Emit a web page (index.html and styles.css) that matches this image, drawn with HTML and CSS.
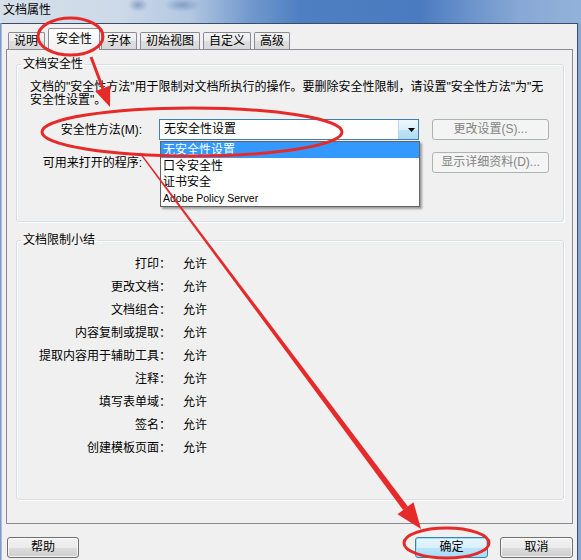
FILE: index.html
```html
<!DOCTYPE html>
<html lang="zh-CN">
<head>
<meta charset="utf-8">
<title>文档属性</title>
<link rel="stylesheet" href="styles.css">
</head>
<body>
<div class="window">
  <div class="titlebar"><span class="title">文档属性</span></div>
  <div class="client">
    <div class="tabs">
      <div class="tab">说明</div>
      <div class="tab active">安全性</div>
      <div class="tab">字体</div>
      <div class="tab">初始视图</div>
      <div class="tab">自定义</div>
      <div class="tab">高级</div>
    </div>
    <div class="panel">
      <fieldset class="group sec">
        <legend>文档安全性</legend>
        <p class="desc">文档的"安全性方法"用于限制对文档所执行的操作。要删除安全性限制，请设置"安全性方法"为"无<br>安全性设置"。</p>
        <div class="form">
          <label class="lbl">安全性方法(M):</label>
          <div class="combo">
            <span class="combo-text">无安全性设置</span>
            <span class="combo-btn"><svg width="7" height="4" viewBox="0 0 7 4"><path d="M0 0H7L3.5 4Z" fill="#000"/></svg></span>
            <ul class="droplist">
              <li class="sel">无安全性设置</li>
              <li>口令安全性</li>
              <li>证书安全</li>
              <li class="en">Adobe Policy Server</li>
            </ul>
          </div>
          <button class="btn disabled" type="button">更改设置(S)...</button>
          <label class="lbl">可用来打开的程序:</label>
          <div></div>
          <button class="btn disabled" type="button">显示详细资料(D)...</button>
        </div>
      </fieldset>
      <fieldset class="group summary">
        <legend>文档限制小结</legend>
        <dl class="rows">
          <dt>打印：</dt><dd>允许</dd>
          <dt>更改文档：</dt><dd>允许</dd>
          <dt>文档组合：</dt><dd>允许</dd>
          <dt>内容复制或提取：</dt><dd>允许</dd>
          <dt>提取内容用于辅助工具：</dt><dd>允许</dd>
          <dt>注释：</dt><dd>允许</dd>
          <dt>填写表单域：</dt><dd>允许</dd>
          <dt>签名：</dt><dd>允许</dd>
          <dt>创建模板页面：</dt><dd>允许</dd>
        </dl>
      </fieldset>
    </div>
    <div class="footer">
      <button class="btn help" type="button">帮助</button>
      <span class="spacer"></span>
      <button class="btn default" type="button">确定</button>
      <button class="btn" type="button">取消</button>
    </div>
  </div>
  <svg class="annot" width="581" height="560" viewBox="0 0 581 560">
    <g fill="none" stroke="#e62a2a" stroke-width="3">
      <ellipse cx="70.5" cy="36.5" rx="32.5" ry="18.5"/>
      <ellipse cx="192" cy="132" rx="150" ry="24"/>
      <ellipse cx="446.5" cy="543" rx="42.5" ry="15"/>
      <line x1="91" y1="57" x2="102.8" y2="88.3"/>
    </g>
    <g fill="#e62a2a">
      <polygon points="110,107 110.3,85.4 95.3,91.2"/>
      <polygon points="140.5,152.6 139.5,153.4 403.1,510 407.9,506.4"/>
      <polygon points="421,529 413.5,502.2 397.5,514.2"/>
    </g>
  </svg>
</div>
</body>
</html>
```

FILE: styles.css
```css
* { box-sizing: border-box; }
html, body { margin: 0; padding: 0; }
body {
  width: 581px;
  height: 560px;
  overflow: hidden;
  font-family: "Liberation Sans", "Noto Sans CJK SC", sans-serif;
  font-size: 12px;
  color: #000;
}
.window {
  position: relative;
  width: 581px;
  height: 560px;
  display: flex;
  flex-direction: column;
  background: linear-gradient(90deg, #7b9bcd 0, #86a6d4 100%);
}
.titlebar {
  flex: none;
  height: 23px;
  line-height: 20px;
  padding-left: 3px;
  background:
    radial-gradient(ellipse 10px 7px at 138px 5px, rgba(70,100,160,.45), transparent),
    radial-gradient(ellipse 18px 7px at 182px 5px, rgba(70,105,165,.45), transparent),
    linear-gradient(90deg, #d6e0eb 0, #ccd9e8 120px, #b2c7e1 190px, #7299cd 250px, #4e7fc2 300px, #4a7bc0 420px, #6b93cb 470px, #88a8d5 520px, #93b2da 581px);
}
.client {
  flex: 1;
  margin: 0 3px 0 1px;
  background: #f0f0f0;
  border: 1px solid #3a4e6b;
  border-bottom: none;
  border-left-color: #aabdd6;
  padding: 4px 4px 0;
}
.tabs {
  position: relative;
  z-index: 2;
  display: flex;
  align-items: flex-end;
  height: 21px;
  padding-left: 2px;
}
.tab {
  height: 17px;
  line-height: 16px;
  padding: 0 5px;
  margin-right: 3px;
  border: 1px solid #898c95;
  border-bottom: none;
  border-radius: 2px 2px 0 0;
  background: linear-gradient(#f3f3f3, #ebebeb 50%, #dedede 50%, #d8d8d8);
  white-space: nowrap;
}
.tab:first-child { padding: 0 6px 0 5px; margin-right: 4px; }
.tab.active {
  height: 22px;
  line-height: 20px;
  padding: 0 7px;
  margin: 0 1px -1px -1px;
  background: linear-gradient(#ffffff, #f6f6f6 60%, #f0f0f0);
}
.panel {
  position: relative;
  z-index: 1;
  border: 1px solid #898c95;
  background: #f0f0f0;
  padding: 6px 8px 23px 9px;
}
.group {
  margin: 0;
  padding: 0;
  min-width: 0;
  border: 1px solid #d5dfe5;
  border-radius: 3px;
  box-shadow: inset 1px 1px 0 #fff, 1px 1px 0 #fff;
}
.group legend {
  margin-left: 4px;
  padding: 0 2px;
  line-height: 16px;
  font-size: 12px;
}
.summary { margin-top: 10px; }
.desc {
  margin: 9px 13px 0;
  line-height: 13px;
  white-space: nowrap;
}
.form {
  display: grid;
  grid-template-columns: 116px 260px 117px;
  grid-auto-rows: 21px;
  column-gap: 13px;
  row-gap: 12px;
  margin: 12px 13px 48px;
}
.lbl {
  text-align: right;
  padding-right: 4px;
  line-height: 22px;
  white-space: nowrap;
}
.combo {
  position: relative;
  display: flex;
  height: 21px;
  border: 1px solid #3c7fb1;
  background: #fff;
}
.combo-text {
  flex: 1;
  padding-left: 4px;
  line-height: 19px;
}
.combo-btn {
  width: 20px;
  padding-left: 6px;
  display: flex;
  align-items: center;
  justify-content: center;
  background: linear-gradient(#eef7fd, #dcf0fb 50%, #c2e4f6 50%, #b0daf2);
  border-left: 1px solid #b6d4ea;
}
.droplist {
  position: absolute;
  z-index: 5;
  top: 21px;
  left: 0;
  width: 260px;
  margin: 0;
  padding: 0;
  list-style: none;
  background: #fff;
  border: 1px solid #646464;
  box-shadow: 2px 2px 2px rgba(0,0,0,.35);
}
.droplist li {
  height: 16px;
  line-height: 16px;
  padding-left: 2px;
  white-space: nowrap;
}
.droplist li.sel { background: #3399ff; color: #fff; }
.droplist li.en { font-size: 10.5px; }
.btn {
  height: 21px;
  padding: 0;
  margin: 0;
  font: inherit;
  font-size: 12px;
  line-height: 19px;
  color: #000;
  border: 1px solid #707070;
  border-radius: 3px;
  background: linear-gradient(#f2f2f2, #ebebeb 50%, #dddddd 50%, #cfcfcf);
  box-shadow: inset 0 0 0 1px rgba(255,255,255,.7);
  white-space: nowrap;
}
.btn.disabled {
  color: #838383;
  border-color: #adb2b5;
  background: #f4f4f4;
  box-shadow: none;
}
.btn.default {
  border-color: #3c7fb1;
  background: linear-gradient(#eaf6fd, #d9f0fc 50%, #bee6fd 50%, #a7d9f5);
  box-shadow: inset 0 0 0 1px #9fe0ff;
}
.rows {
  display: grid;
  grid-template-columns: 141px auto;
  grid-auto-rows: 23px;
  column-gap: 12px;
  align-items: center;
  margin: 3px 13px 41px;
}
.rows dt { text-align: right; white-space: nowrap; }
.rows dd { margin: 0; }
.footer {
  display: flex;
  margin-top: 13px;
  padding-left: 1px;
}
.footer .btn { width: 73px; }
.footer .btn.help { width: 72px; }
.footer .spacer { flex: 1; }
.footer .btn.default { margin-right: 12px; }
.annot {
  position: absolute;
  left: 0;
  top: 0;
  z-index: 10;
  pointer-events: none;
}
```
